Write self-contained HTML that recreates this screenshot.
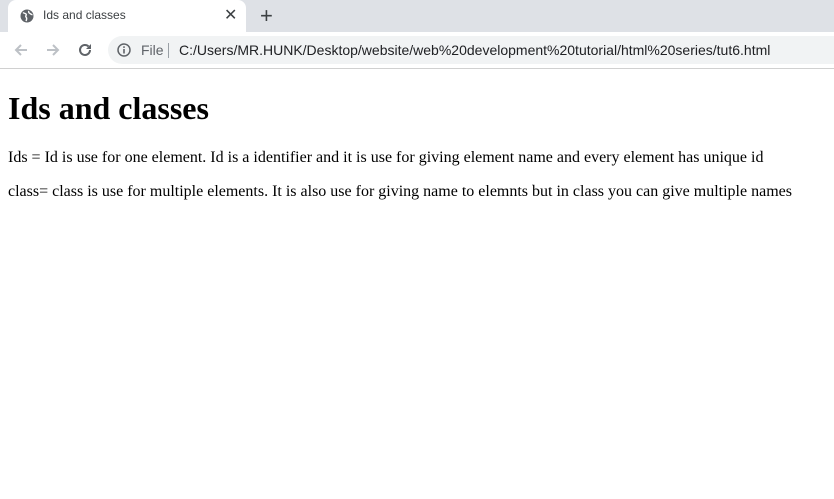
<!DOCTYPE html>
<html><head><style>
html,body{margin:0;padding:0;background:#fff;}
#chrome{position:relative;height:69px;font-family:"Liberation Sans",sans-serif;}
#tabs{position:absolute;left:0;top:0;width:834px;height:32px;background:#dee1e6;}
#tab{position:absolute;left:8px;top:0;width:238px;height:32px;background:#fff;border-radius:8px 8px 0 0;}
#tab .t{position:absolute;left:35px;top:8px;font-size:12px;color:#3c4043;}
#tab .x{position:absolute;left:216px;top:5px;font-size:16px;color:#3c4043;}
#plus{position:absolute;left:260px;top:3px;font-size:22px;color:#3c4043;}
#bar{position:absolute;left:0;top:32px;width:834px;height:36px;background:#fff;border-bottom:1px solid #d0d0d0;}
#pill{position:absolute;left:108px;top:4px;width:740px;height:28px;background:#f1f3f4;border-radius:14px;}
#pill .f{position:absolute;left:33px;top:6px;font-size:14px;color:#5f6368;}
#pill .sep{position:absolute;left:60px;top:7px;width:1px;height:15px;background:#9aa0a6;}
#pill .u{position:absolute;left:71px;top:6px;font-size:14px;color:#202124;}
#content{font-family:"Liberation Serif",serif;margin:8px;}
h1{font-size:32px;margin:21.44px 0;}
p{font-size:16px;margin:16px 0;}
</style></head><body>
<div id="chrome">
<div id="tabs">
<div id="tab">
<svg style="position:absolute;left:12px;top:9px" width="14" height="14" viewBox="0 0 14 14"><circle cx="7" cy="7" r="6.5" fill="#5f6368"/><path d="M3 3.5c1 1 2 .5 3 1.5s-1 2 0 3 1 2 0 4M9 2c-1 1 0 2 1 2.5s1.5 1.5 2.5 1" stroke="#fff" stroke-width="1.4" fill="none"/></svg>
<span class="t">Ids and classes</span><span class="x">✕</span></div>
<span id="plus">+</span>
</div>
<div id="bar">
<svg style="position:absolute;left:12px;top:9px" width="18" height="18" viewBox="0 0 18 18"><path d="M15 9H4M9 4L4 9l5 5" stroke="#bdc1c6" stroke-width="2" fill="none"/></svg>
<svg style="position:absolute;left:44px;top:9px" width="18" height="18" viewBox="0 0 18 18"><path d="M3 9h11M9 4l5 5-5 5" stroke="#bdc1c6" stroke-width="2" fill="none"/></svg>
<svg style="position:absolute;left:76px;top:9px" width="18" height="18" viewBox="0 0 18 18"><path d="M14 9a5 5 0 1 1-1.5-3.6" stroke="#5f6368" stroke-width="2" fill="none"/><path d="M15 3v5h-5z" fill="#5f6368"/></svg>
<div id="pill">
<svg style="position:absolute;left:9px;top:7px" width="14" height="14" viewBox="0 0 14 14"><circle cx="7" cy="7" r="6" stroke="#5f6368" stroke-width="1.5" fill="none"/><rect x="6.2" y="6" width="1.6" height="4.5" fill="#5f6368"/><rect x="6.2" y="3.3" width="1.6" height="1.6" fill="#5f6368"/></svg>
<span class="f">File</span><span class="sep"></span>
<span class="u">C:/Users/MR.HUNK/Desktop/website/web%20development%20tutorial/html%20series/tut6.html</span>
</div>
</div>
</div>
<div id="content">
<h1>Ids and classes</h1>
<p>Ids = Id is use for one element. Id is a identifier and it is use for giving element name and every element has unique id</p>
<p>class= class is use for multiple elements. It is also use for giving name to elemnts but in class you can give multiple names</p>
</div>
</body></html>
